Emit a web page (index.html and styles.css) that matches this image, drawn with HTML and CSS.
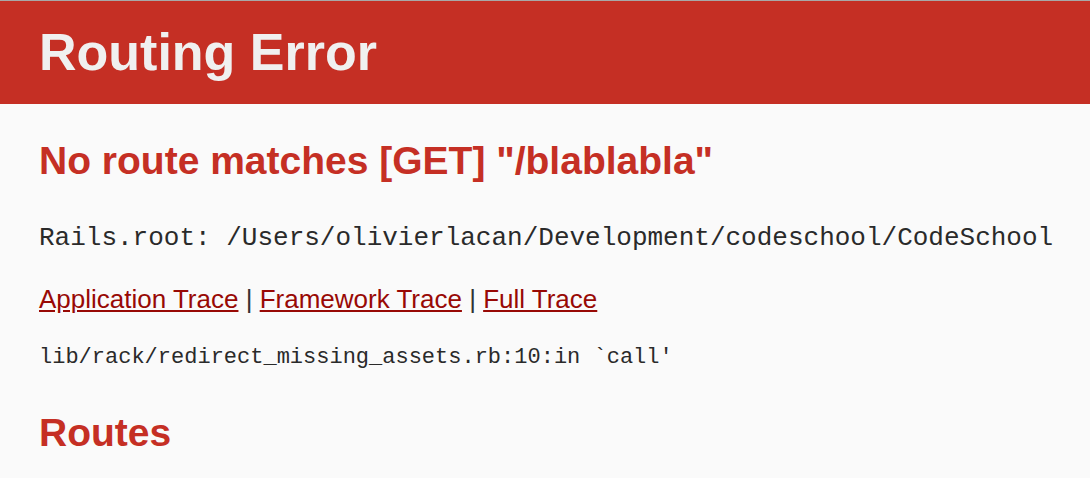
FILE: index.html
```html
<!DOCTYPE html>
<html>
<head>
<meta charset="utf-8">
<title>Routing Error</title>
<link rel="stylesheet" href="styles.css">
</head>
<body>
<header class="header">
  <h1 class="title">Routing Error</h1>
</header>
<div class="container">
  <h2 class="heading">No route matches [GET] "/blablabla"</h2>
  <p class="root"><code class="mono">Rails.root: /Users/olivierlacan/Development/codeschool/CodeSchool</code></p>
  <div class="traces">
    <p class="trace-links"><a href="#" class="link">Application Trace</a> | <a href="#" class="link">Framework Trace</a> | <a href="#" class="link">Full Trace</a></p>
    <pre class="trace"><code class="trace-code">lib/rack/redirect_missing_assets.rb:10:in `call'</code></pre>
  </div>
  <h2 class="heading">Routes</h2>
</div>
</body>
</html>
```

FILE: styles.css
```css
html, body {
  margin: 0;
  padding: 0;
}
body {
  background-color: #fafafa;
  color: #333;
  font-family: "Liberation Sans", Arial, Helvetica, sans-serif;
  font-size: 26px;
  line-height: 36px;
  border-top: 1px solid #a8a8a8;
}
.header {
  color: #f0f0f0;
  background: #c52f24;
  padding: 13px 39px;
}
.title {
  margin: 10px 0;
  font-size: 52px;
  line-height: 57px;
  font-weight: bold;
}
.container {
  padding: 0 39px;
}
.heading {
  color: #c52f24;
  font-size: 39px;
  line-height: 50px;
  margin: 32px 0;
  font-weight: bold;
}
.root {
  margin: 32px 0 25px;
  white-space: nowrap;
}
.mono {
  font-family: "Liberation Mono", "Courier New", monospace;
  font-size: 26px;
  color: #2a2a2a;
}
.trace-links {
  margin: 25px 0 23px;
}
.link {
  color: #980905;
}
.trace {
  font-family: "Liberation Mono", "Courier New", monospace;
  font-size: 22px;
  line-height: 36px;
  margin: 23px 0 30px;
  white-space: pre-wrap;
  color: #2a2a2a;
}
.trace-code {
  font-family: inherit;
  font-size: inherit;
}
```
